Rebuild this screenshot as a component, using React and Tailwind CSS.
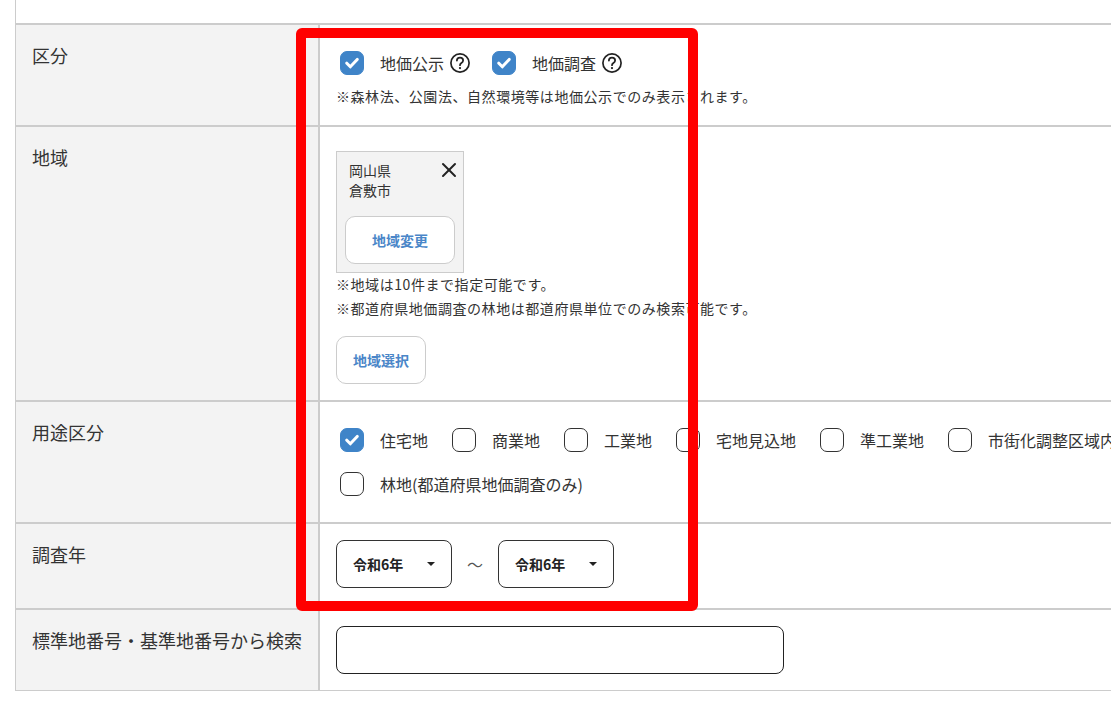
import React from 'react';
import { X } from 'lucide-react';

const font = { fontFamily: '"Noto Sans CJK JP", "Noto Sans", sans-serif' };

const Check = ({ checked }) => (
  <span
    className={`flex h-6 w-6 shrink-0 items-center justify-center rounded-[7px] border ${
      checked ? 'border-[#3f84c8] bg-[#3f84c8]' : 'border-[#333] bg-white'
    }`}
  >
    {checked && (
      <svg width="14" height="12" viewBox="0 0 14 12" fill="none">
        <path d="M1.8 6.2 5.3 9.8 12.2 2.4" stroke="#fff" strokeWidth="3" strokeLinecap="round" strokeLinejoin="round" />
      </svg>
    )}
  </span>
);

const Help = () => (
  <svg width="20" height="20" viewBox="0 0 20 20" fill="none" className="ml-[6px]">
    <circle cx="10" cy="10" r="9.1" stroke="#222" strokeWidth="1.7" />
    <path d="M6.9 7.6C6.9 5.7 8.2 4.6 10 4.6s3.1 1.1 3.1 2.8c0 1.3-.8 1.9-1.7 2.5-.9.6-1.4 1.1-1.4 2.3" stroke="#222" strokeWidth="1.8" strokeLinecap="round" />
    <circle cx="10" cy="15.1" r="1.15" fill="#222" />
  </svg>
);

const Option = ({ label, checked, help }) => (
  <label className="flex items-center">
    <Check checked={checked} />
    <span className="ml-4 whitespace-nowrap text-base leading-6 text-[#333]">{label}</span>
    {help && <Help />}
  </label>
);

const Note = ({ children }) => (
  <p className="whitespace-nowrap text-sm leading-6 tracking-[0.04em] text-[#333]">{children}</p>
);

const Row = ({ label, className, children }) => (
  <div className={`flex border-t-2 border-[#ccc] ${className}`}>
    <div className="w-[304px] shrink-0 border-r-2 border-[#ccc] bg-[#f3f3f3] pl-4 pt-[18px] text-lg leading-6 text-[#333]">
      {label}
    </div>
    <div className="flex-1 pl-4">{children}</div>
  </div>
);

const Select = () => (
  <div className="flex h-12 w-[116px] items-center justify-between rounded-lg border border-[#333] bg-white pl-4 pr-4 text-sm font-bold text-[#222]">
    <span>令和6年</span>
    <span className="h-0 w-0 border-x-[4px] border-t-[4px] border-x-transparent border-t-[#222]" />
  </div>
);

export default function App() {
  return (
    <div className="relative h-[706px] w-[1111px] overflow-hidden bg-white" style={font}>
      <div className="ml-[15px] w-[1300px] border-b border-l border-[#ccc]">
        <div className="h-[23px]" />

        <Row label="区分" className="h-[102px]">
          <div className="flex gap-[22px] pl-1 pt-[26px]">
            <Option label="地価公示" checked help />
            <Option label="地価調査" checked help />
          </div>
          <div className="pt-[9px]">
            <Note>※森林法、公園法、自然環境等は地価公示でのみ表示されます。</Note>
          </div>
        </Row>

        <Row label="地域" className="h-[275px]">
          <div className="pt-6">
            <div className="relative h-[122px] w-[128px] border border-[#ccc] bg-[#f3f3f3] pl-2 pt-2">
              <p className="pl-1 text-sm leading-5 text-[#333]">岡山県</p>
              <p className="pl-1 text-sm leading-5 text-[#333]">倉敷市</p>
              <X className="absolute right-[2px] top-[6px] h-6 w-6 text-[#222]" strokeWidth={2} />
              <button className="mt-4 flex h-12 w-[110px] items-center justify-center rounded-[10px] border border-[#ccc] bg-white text-sm font-bold text-[#4a86c8]">
                地域変更
              </button>
            </div>
          </div>
          <div className="-mt-px">
            <Note>※地域は10件まで指定可能です。</Note>
            <Note>※都道府県地価調査の林地は都道府県単位でのみ検索可能です。</Note>
          </div>
          <button className="mt-4 flex h-12 w-[90px] items-center justify-center rounded-[10px] border border-[#ccc] bg-white text-sm font-bold text-[#4a86c8]">
            地域選択
          </button>
        </Row>

        <Row label="用途区分" className="h-[122px]">
          <div className="flex w-[800px] flex-wrap gap-x-6 gap-y-5 pl-1 pt-[26px]">
            <Option label="住宅地" checked />
            <Option label="商業地" />
            <Option label="工業地" />
            <Option label="宅地見込地" />
            <Option label="準工業地" />
            <Option label="市街化調整区域内" />
            <Option label="林地(都道府県地価調査のみ)" />
          </div>
        </Row>

        <Row label="調査年" className="h-[86px]">
          <div className="flex items-center pt-4">
            <Select />
            <span className="w-[46px] text-center text-base text-[#555]">～</span>
            <Select />
          </div>
        </Row>

        <Row label="標準地番号・基準地番号から検索" className="h-[82px]">
          <div className="pt-4">
            <input className="h-12 w-[448px] rounded-lg border border-[#222] bg-white" />
          </div>
        </Row>
      </div>

      {/* highlight frame drawn over the form */}
      <div className="pointer-events-none absolute left-[296px] top-[28px] h-[583px] w-[402px] rounded-[6px] border-[10px] border-[#ff0000]" />
    </div>
  );
}
